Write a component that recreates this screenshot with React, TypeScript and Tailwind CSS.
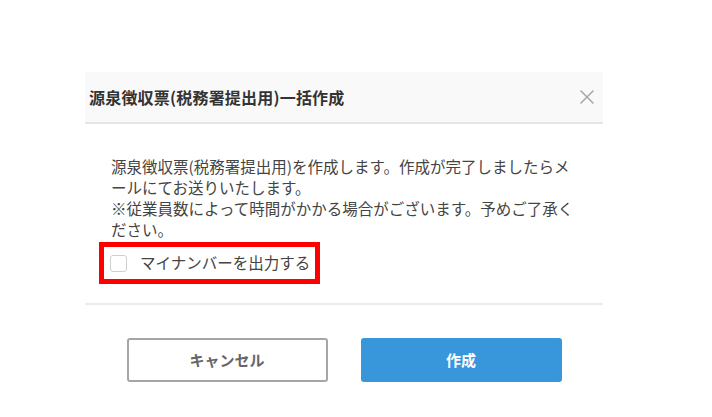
import { X } from "lucide-react";

export default function App() {
  return (
    <div
      className="w-[712px] h-[417px] bg-white overflow-hidden pt-[72px] pl-[85px]"
      style={{ fontFamily: '"Noto Sans CJK JP", "Noto Sans", sans-serif' }}
    >
      <div className="w-[518px] bg-white">
        {/* header */}
        <div className="h-[52px] flex items-center justify-between pl-[4px] pr-[4px] bg-[#f9f9f9] border-b-2 border-[#e6e6e6]">
          <h2 className="text-[16px] font-bold text-[#333] tracking-[0.2px]">
            源泉徴収票(税務署提出用)一括作成
          </h2>
          <X className="h-[24px] w-[24px] text-[#a8a8a8]" strokeWidth={1.6} />
        </div>

        {/* body */}
        <div className="pt-[32px] pb-[19px] pl-[26px] pr-[25px]">
          <p className="text-[15.5px] leading-[21px] text-[#444]">
            源泉徴収票(税務署提出用)を作成します。作成が完了しましたらメールにてお送りいたします。
            <br />
            ※従業員数によって時間がかかる場合がございます。予めご了承ください。
          </p>
          <div className="mt-[2px] -ml-[12px] inline-flex items-center gap-[13px] border-[5px] border-[#ff0000] h-[42px] pl-[6px] pr-[5px]">
            <span className="w-[17px] h-[17px] rounded-[3px] border border-[#cfcfcf] bg-white" />
            <span className="text-[15.5px] text-[#444]">マイナンバーを出力する</span>
          </div>
        </div>

        {/* footer */}
        <div className="border-t-2 border-[#ebebeb] pt-[33px] pb-[30px] flex justify-center gap-[33px]">
          <button className="w-[201px] h-[44px] rounded-[3px] border-2 border-[#a6a6a6] bg-white text-[15px] font-bold text-[#666]">
            キャンセル
          </button>
          <button className="w-[201px] h-[44px] rounded-[3px] bg-[#3896db] text-[15px] font-bold text-white">
            作成
          </button>
        </div>
      </div>
    </div>
  );
}
